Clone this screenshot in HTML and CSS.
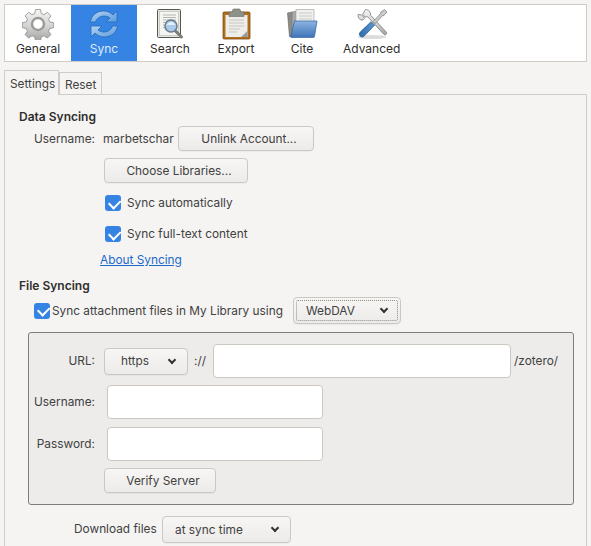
FILE: index.html
```html
<!DOCTYPE html>
<html lang="en">
<head>
<meta charset="UTF-8" />
<meta name="viewport" content="width=device-width, initial-scale=1.0" />
<title>Zotero Preferences</title>
<link rel="stylesheet" href="styles.css">
</head>
<body>

<svg class="defs" width="0" height="0">
  <defs>
    <linearGradient id="metal" x1="0" y1="0" x2="0" y2="1">
      <stop offset="0" stop-color="#f4f4f3"/>
      <stop offset="0.55" stop-color="#d2d2d0"/>
      <stop offset="1" stop-color="#a3a3a1"/>
    </linearGradient>
    <linearGradient id="syncTop" x1="0" y1="0" x2="1" y2="1">
      <stop offset="0" stop-color="#b5d3f0"/>
      <stop offset="1" stop-color="#5a9ae0"/>
    </linearGradient>
    <linearGradient id="folderBlue" x1="0" y1="0" x2="0" y2="1">
      <stop offset="0" stop-color="#8db4e2"/>
      <stop offset="1" stop-color="#3f74b8"/>
    </linearGradient>
    <linearGradient id="driverBlue" x1="0" y1="0" x2="1" y2="0">
      <stop offset="0" stop-color="#2e6cab"/>
      <stop offset="1" stop-color="#5c97d0"/>
    </linearGradient>
  </defs>
</svg>

<nav class="toolbar">
  <a class="tool">
    <svg class="tool-icon" viewBox="0 0 32 32">
      <path d="M13.5 1.5h5l.8 4 2.7 1.1 3.4-2.3 3.5 3.5-2.3 3.4 1.1 2.7 4 .8v5l-4 .8-1.1 2.7 2.3 3.4-3.5 3.5-3.4-2.3-2.7 1.1-.8 4h-5l-.8-4-2.7-1.1-3.4 2.3-3.5-3.5 2.3-3.4-1.1-2.7-4-.8v-5l4-.8 1.1-2.7-2.3-3.4 3.5-3.5 3.4 2.3 2.7-1.1z" fill="url(#metal)" stroke="#8b8b89" stroke-width="0.8"/>
      <circle cx="16" cy="16" r="6" fill="#fff" stroke="#9a9a98" stroke-width="2.4"/>
    </svg>
    <span>General</span>
  </a>
  <a class="tool active">
    <svg class="tool-icon" viewBox="0 0 32 32">
      <path d="M2.5 14C3.5 7 9 3 15.5 3c4 0 7 1.5 9.5 4L29 3v11H18l4-4c-2-1.5-4-2-6-2-4 0-7.5 2.5-8.5 6z" fill="url(#syncTop)" stroke="#2569b8" stroke-width="0.8"/>
      <path d="M29.5 18C28.5 25 23 29 16.5 29c-4 0-7-1.5-9.5-4L3 29V18h11l-4 4c2 1.5 4 2 6 2 4 0 7.5-2.5 8.5-6z" fill="url(#syncTop)" stroke="#2569b8" stroke-width="0.8"/>
    </svg>
    <span>Sync</span>
  </a>
  <a class="tool">
    <svg class="tool-icon" viewBox="0 0 32 32">
      <rect x="3.5" y="1.5" width="23" height="28" rx="1" fill="#e6e6e3" stroke="#55564f" stroke-width="1"/>
      <rect x="5.5" y="3.5" width="19" height="24" fill="#f4f4f1" stroke="#b5b5b1" stroke-width="0.6"/>
      <path d="M9 7h13M9 9.5h13M9 12h13M9 14.5h5M9 17h3M9 19.5h3" stroke="#b0b0ac" stroke-width="0.9"/>
      <path d="M21 22.5l6.5 6.5" stroke="#7c7c78" stroke-width="3" stroke-linecap="round"/>
      <circle cx="17" cy="18" r="6" fill="#a9cbe9" stroke="#6b7c8c" stroke-width="1.5"/>
      <path d="M12.8 17a4.5 4.5 0 0 1 8.4 0z" fill="#e4eff8"/>
    </svg>
    <span>Search</span>
  </a>
  <a class="tool">
    <svg class="tool-icon" viewBox="0 0 32 32">
      <rect x="3" y="4" width="27" height="27" rx="1" fill="#b1701d" stroke="#7d4d10" stroke-width="0.8"/>
      <rect x="5.5" y="7" width="22" height="22" fill="#ededea"/>
      <path d="M9 12h15M9 15h15M9 18h15M9 21h11M9 24h8" stroke="#c3c3bf" stroke-width="0.9"/>
      <path d="M21 29h6.5v-6z" fill="#9a9a97"/>
      <path d="M12.5 4V2.5c0-1 .8-1.5 1.5-1.5h5c.7 0 1.5.5 1.5 1.5V4H24v4.5H9V4z" fill="#8f9188" stroke="#686a62" stroke-width="0.6"/>
    </svg>
    <span>Export</span>
  </a>
  <a class="tool">
    <svg class="tool-icon" viewBox="0 0 32 32">
      <path d="M1.5 5l5-1v24l-3 .8z" fill="#8b8b88" stroke="#606060" stroke-width="0.6"/>
      <path d="M6 4l5-1v22H6z" fill="#a8a8a5" stroke="#707070" stroke-width="0.5"/>
      <path d="M10 1.5h18V18H10z" fill="#f0f0ee" stroke="#9b9b98" stroke-width="0.6"/>
      <path d="M13 5h13M13 8h13M13 11h13" stroke="#c4c4c0" stroke-width="0.9"/>
      <path d="M8.5 13h22.5l-2.5 15.5c0 .5-.5 .9-1 .9H5.5c-.7 0-.9-.4-.8-.9z" fill="url(#folderBlue)" stroke="#2f5f9c" stroke-width="0.7"/>
    </svg>
    <span>Cite</span>
  </a>
  <a class="tool">
    <svg class="tool-icon" viewBox="0 0 32 32">
      <ellipse cx="16" cy="29" rx="14" ry="2" fill="#dcdcda"/>
      <path d="M9.5 1.5L6.8 6.2l2 2.8 3-.2 16 17.5c1.5 1.500 3.800-.5 2.500-2.200L14.500 7.200c.5-3-1.800-5.700-5-5.700z M2.200 6.500C1.500 9.800 4 12.500 7 12l1.500-1.800-2.800-3.300z" fill="url(#metal)" stroke="#77797a" stroke-width="0.8"/>
      <path d="M28.5 1.5l2.5 2.5-3 3.5-1.5.2-7.5 8-2-2 7.5-8 .2-1.500z" fill="#c9cacb" stroke="#77797a" stroke-width="0.7"/>
      <path d="M15 13.8l3.5 3.5-10 10.500c-1.500 1.500-3 1.500-4.300.3-1.200-1.300-1-3 .3-4.300z" fill="url(#driverBlue)" stroke="#1f4f86" stroke-width="0.7"/>
    </svg>
    <span>Advanced</span>
  </a>
</nav>

<div class="tabs">
  <a class="tab selected">Settings</a>
  <a class="tab">Reset</a>
</div>

<main class="panel">
  <h4>Data Syncing</h4>
  <div class="row account-row">
    <span class="account-label">Username:</span>
    <span class="account-name">marbetschar</span>
    <button class="btn unlink-btn">Unlink Account...</button>
  </div>
  <div class="indent">
    <button class="btn libraries-btn">Choose Libraries...</button>
    <label class="check check-first"><span class="box"></span>Sync automatically</label>
    <label class="check check-second"><span class="box"></span>Sync full-text content</label>
  </div>
  <a class="link">About Syncing</a>

  <h4 class="file-heading">File Syncing</h4>
  <div class="row attach-row">
    <label class="check attach-check"><span class="box"></span>Sync attachment files in My Library using</label>
    <div class="btn select webdav"><span class="focus-ring"><span>WebDAV</span><i class="chev"></i></span></div>
  </div>

  <div class="groupbox">
    <div class="row url-row">
      <span class="field-label">URL:</span>
      <div class="btn select scheme"><span>https</span><i class="chev"></i></div>
      <span class="scheme-sep">://</span>
      <input class="input url-input" type="text" />
      <span class="suffix">/zotero/</span>
    </div>
    <div class="row field-row">
      <span class="field-label">Username:</span>
      <input class="input cred-input" type="text" />
    </div>
    <div class="row field-row">
      <span class="field-label">Password:</span>
      <input class="input cred-input" type="password" />
    </div>
    <button class="btn verify-btn">Verify Server</button>
  </div>

  <div class="row download-row">
    <span class="download-label">Download files</span>
    <div class="btn select download"><span>at sync time</span><i class="chev"></i></div>
  </div>
</main>

</body>
</html>
```

FILE: styles.css
```css
* {
  box-sizing: border-box;
  margin: 0;
  padding: 0;
}

html, body {
  height: 546px;
  overflow: hidden;
}

body {
  font-family: 'Inter', 'Noto Sans', sans-serif;
  font-size: 11.85px;
  color: #41413f;
  background: #f5f4f2;
  padding: 4px 4px 0;
}

.defs {
  position: absolute;
}

/* Top toolbar */
.toolbar {
  display: flex;
  height: 58px;
  background: #fff;
  border: 1px solid #cfccc6;
  font-size: 12px;
}

.tool {
  min-width: 66px;
  padding: 0 8px;
  display: flex;
  flex-direction: column;
  align-items: center;
  color: #2e2e2c;
}

.tool.active {
  background: #3584e4;
  color: #dfeafa;
}

.tool-icon {
  width: 32px;
  height: 32px;
  margin-top: 3px;
  margin-bottom: 1px;
}

/* Tabs */
.tabs {
  display: flex;
  align-items: flex-end;
  height: 24px;
  margin-top: 8px;
  position: relative;
}

.tab {
  height: 22px;
  padding: 5px 5px 0;
  border: 1px solid #cfccc6;
  border-bottom: none;
}

.tab.selected {
  width: 55px;
  height: 25px;
  padding: 6px 0 0 5px;
  margin-bottom: -1px;
  background: #f5f4f2;
  position: relative;
  z-index: 1;
}

/* Main panel */
.panel {
  height: 461px;
  border: 1px solid #cfccc6;
  padding: 14px 12px 0 23px;
}

h4 {
  font-size: 12px;
  font-weight: 600;
  margin-left: -9px;
  height: 16px;
  line-height: 16px;
  color: #2e2e2c;
}

.row {
  display: flex;
  align-items: center;
}

.account-row {
  height: 25px;
  margin-top: 1px;
  margin-left: 6px;
}

.account-label {
  width: 69px;
}

.account-name {
  width: 75px;
}

.btn {
  height: 25px;
  padding-left: 6px;
  font: inherit;
  color: #41413f;
  background: linear-gradient(#f7f6f5, #edebe9);
  border: 1px solid #cdc7c2;
  border-radius: 4px;
  box-shadow: 0 1px 1px rgba(0,0,0,0.04);
}

.unlink-btn {
  width: 136px;
}

.indent {
  margin-left: 76px;
  margin-top: 7px;
}

.libraries-btn {
  width: 144px;
  display: block;
}

.check {
  display: flex;
  align-items: center;
  gap: 6px;
  height: 16px;
}

.check-first {
  margin-top: 12px;
  margin-left: 1px;
}

.check-second {
  margin-top: 15px;
  margin-left: 1px;
}

.box {
  width: 16px;
  height: 16px;
  border-radius: 3px;
  background: #3584e4;
  position: relative;
  flex: none;
}

.box::after {
  content: "";
  position: absolute;
  left: 3.5px;
  top: 3.5px;
  width: 9px;
  height: 5.5px;
  border-left: 2.5px solid #fff;
  border-bottom: 2.5px solid #fff;
  transform: rotate(-45deg);
}

.link {
  display: block;
  margin-left: 72px;
  margin-top: 10px;
  height: 16px;
  line-height: 16px;
  color: #1b6acb;
  text-decoration: underline;
}

.file-heading {
  margin-top: 10px;
}

.attach-row {
  height: 27px;
  margin-top: 3px;
  margin-left: 6px;
}

.attach-check {
  gap: 2px;
  width: 259px;
}

.select {
  display: flex;
  align-items: center;
  justify-content: space-between;
  height: 27px;
  padding: 0 12px;
}

.webdav {
  width: 108px;
  padding: 2px;
}

.focus-ring {
  flex: 1;
  height: 100%;
  display: flex;
  align-items: center;
  justify-content: space-between;
  padding: 0 10px 0 9px;
  border: 1px dotted #8f8c88;
  border-radius: 2px;
}

.chev {
  width: 6px;
  height: 6px;
  margin-top: -3px;
  border-right: 2px solid #333;
  border-bottom: 2px solid #333;
  transform: rotate(45deg);
}

/* WebDAV box */
.groupbox {
  height: 173px;
  margin-top: 8px;
  background: #edecea;
  border: 1px solid #7f7d7a;
  border-radius: 3px;
  padding: 11px 0 0;
}

.field-label {
  width: 66px;
  text-align: right;
  flex: none;
}

.url-row {
  height: 34px;
}

.scheme {
  width: 84px;
  margin-left: 9px;
  padding-left: 16px;
}

.scheme-sep {
  margin-left: 6px;
  width: 19px;
}

.input {
  height: 34px;
  background: #fff;
  border: 1px solid #cdc7c2;
  border-radius: 4px;
  font: inherit;
}

.url-input {
  width: 298px;
}

.suffix {
  margin-left: 3px;
}

.field-row {
  height: 34px;
  margin-top: 7px;
}

.field-row:nth-child(3) {
  margin-top: 8px;
}

.cred-input {
  width: 216px;
  margin-left: 12px;
}

.verify-btn {
  display: block;
  width: 112px;
  margin-left: 75px;
  margin-top: 7px;
}

.download-row {
  margin-top: 11px;
  margin-left: 46px;
}

.download-label {
  width: 88px;
  padding-bottom: 2px;
}

.download {
  width: 129px;
}
```
